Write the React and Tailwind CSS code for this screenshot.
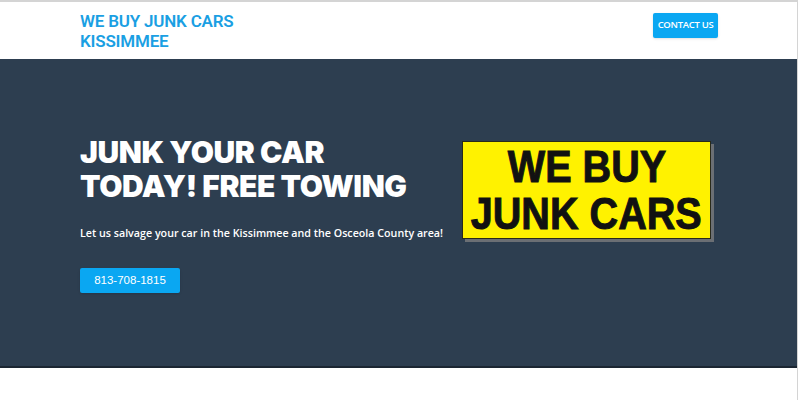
export default function App() {
  return (
    <div className="w-[800px] h-[400px] bg-white overflow-hidden relative" style={{ fontFamily: '"Open Sans", "Liberation Sans", sans-serif' }}>
      <div className="w-[798px] h-[400px] border-t-2 border-r border-[#d4d4d4] flex flex-col">
        <header className="h-[57px] flex justify-between items-start pl-[80px] pr-[79px]">
          <div className="pt-[9px] text-[#1a9fe3] font-semibold text-[17px] leading-[20px] tracking-[-0.2px]" style={{ fontFamily: 'Roboto, "Noto Sans", sans-serif' }}>
            <div>WE BUY JUNK CARS</div>
            <div>KISSIMMEE</div>
          </div>
          <button className="mt-[11px] w-[65px] h-[25px] rounded-[2px] bg-[#0aa7f2] text-white text-[9.5px] font-semibold shadow-sm tracking-[-0.3px]">
            CONTACT US
          </button>
        </header>
        <section className="h-[309px] bg-[#2d3e50] border-b-2 border-[#1b2632] flex">
          <div className="pl-[80px] pt-[76px] w-[462px] shrink-0">
            <h1 className="text-white font-black text-[30px] leading-[34px] tracking-[-0.4px]" style={{ fontFamily: 'Inter, "Noto Sans", sans-serif' }}>
              <div>JUNK YOUR CAR</div>
              <div>TODAY! FREE TOWING</div>
            </h1>
            <p className="mt-[22px] text-white text-[10.7px] font-semibold whitespace-nowrap">
              Let us salvage your car in the Kissimmee and the Osceola County area!
            </p>
            <button className="mt-[27px] w-[100px] h-[25px] rounded-[2px] bg-[#0aa7f2] text-white text-[11.5px] shadow" style={{ fontFamily: '"Liberation Sans", Arial, sans-serif' }}>
              813-708-1815
            </button>
          </div>
          <div className="pt-[82px]">
            <div className="w-[252px] h-[101px] relative">
              <div className="absolute left-[3px] top-[3px] w-[249px] h-[98px] bg-[#6b6f74]" />
              <div className="absolute left-0 top-0 w-[249px] h-[98px] bg-[#fff200] border border-[#2a2a1a] flex flex-col items-center justify-center" style={{ fontFamily: '"Liberation Sans", Arial, sans-serif' }}>
                <div className="text-[#111] font-bold text-[45px] leading-[47px] scale-x-[0.88] whitespace-nowrap [-webkit-text-stroke:1px_#111]">WE BUY</div>
                <div className="text-[#111] font-bold text-[45px] leading-[47px] scale-x-[0.88] whitespace-nowrap [-webkit-text-stroke:1px_#111]">JUNK CARS</div>
              </div>
            </div>
          </div>
        </section>
      </div>
    </div>
  );
}
